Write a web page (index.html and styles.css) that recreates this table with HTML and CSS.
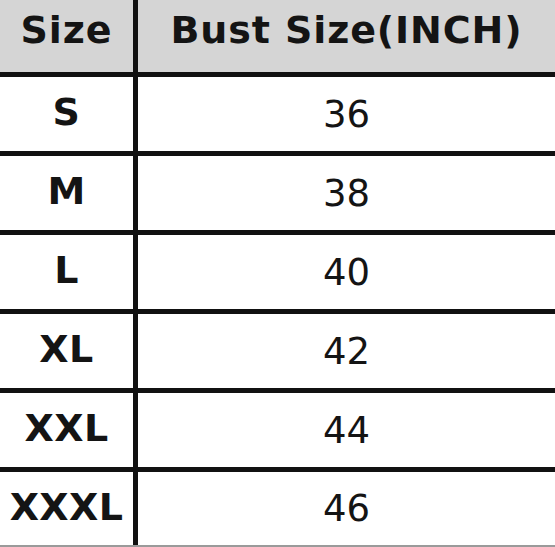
FILE: index.html
```html
<!DOCTYPE html>
<html>
<head>
<meta charset="utf-8">
<link rel="stylesheet" href="styles.css">
</head>
<body>
<div class="chart">
  <div class="cell head">Size</div>
  <div class="cell head">Bust Size(INCH)</div>
  <div class="cell size">S</div>
  <div class="cell val">36</div>
  <div class="cell size">M</div>
  <div class="cell val">38</div>
  <div class="cell size">L</div>
  <div class="cell val">40</div>
  <div class="cell size">XL</div>
  <div class="cell val">42</div>
  <div class="cell size">XXL</div>
  <div class="cell val">44</div>
  <div class="cell size">XXXL</div>
  <div class="cell val">46</div>
</div>
</body>
</html>
```
FILE: styles.css
```css
html, body {
  margin: 0;
  padding: 0;
  background: #ffffff;
}
.chart {
  width: 555px;
  height: 545px;
  display: grid;
  grid-template-columns: 133px 1fr;
  grid-template-rows: 72px 74px 74px 74px 74px 74px 73px;
  column-gap: 5px;
  row-gap: 5px;
  background: #111111;
  border-bottom: 2px solid #9a9a9a;
  font-family: "DejaVu Sans", Verdana, sans-serif;
  color: #141414;
}
.cell {
  display: flex;
  align-items: center;
  justify-content: center;
  background: #ffffff;
  box-sizing: border-box;
}
.head {
  background: #d5d5d5;
  font-weight: bold;
  font-size: 38px;
  letter-spacing: 0.9px;
  padding-bottom: 12px;
}
.size {
  font-weight: bold;
  font-size: 38px;
  letter-spacing: 0.4px;
  padding-bottom: 4px;
}
.val {
  font-size: 37px;
}
```
